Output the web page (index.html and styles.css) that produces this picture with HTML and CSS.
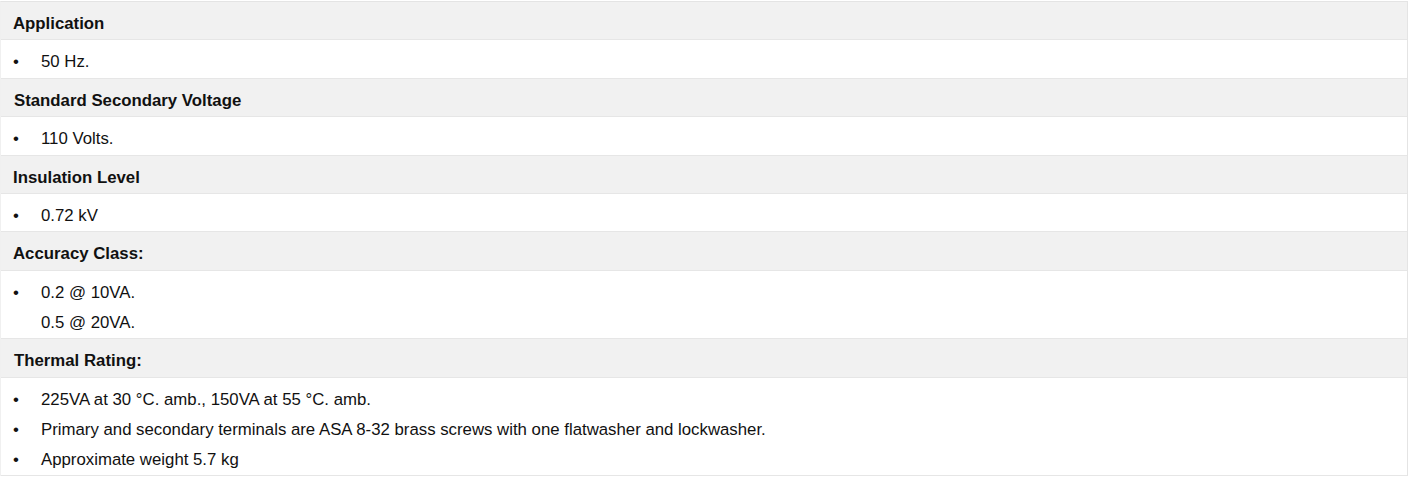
FILE: index.html
```html
<!DOCTYPE html>
<html>
<head>
<meta charset="utf-8">
<link rel="stylesheet" href="styles.css">
</head>
<body>
<div class="spec">
  <div class="head">Application</div>
  <div class="body"><ul><li>50 Hz.</li></ul></div>
  <div class="head h2">Standard Secondary Voltage</div>
  <div class="body"><ul><li>110 Volts.</li></ul></div>
  <div class="head">Insulation Level</div>
  <div class="body"><ul><li>0.72 kV</li></ul></div>
  <div class="head">Accuracy Class:</div>
  <div class="body"><ul><li>0.2 @ 10VA.<br>0.5 @ 20VA.</li></ul></div>
  <div class="head h2">Thermal Rating:</div>
  <div class="body"><ul><li>225VA at 30 °C. amb., 150VA at 55 °C. amb.</li><li>Primary and secondary terminals are ASA 8-32 brass screws with one flatwasher and lockwasher.</li><li>Approximate weight 5.7 kg</li></ul></div>
</div>
</body>
</html>
```
FILE: styles.css
```css
html, body {
  margin: 0;
  padding: 0;
  background: #ffffff;
}
body {
  padding-top: 1px;
  font-family: "Liberation Sans", Arial, sans-serif;
  color: #111111;
}
.spec {
  width: 1406px;
  border-right: 1px solid #e4e4e4;
  border-left: 1px solid #f0f0f0;
  border-top: 1px solid #e4e4e4;
}
.head {
  background: #f1f1f1;
  font-weight: bold;
  font-size: 16.8px;
  line-height: 30px;
  padding: 7px 12px 0.4px;
  border-bottom: 1px solid #e6e6e6;
}
.head.h2 {
  padding-left: 13px;
}
.body {
  border-bottom: 1px solid #e6e6e6;
  font-size: 16.8px;
  line-height: 30px;
  padding: 7px 0 0.4px;
}
.body ul {
  margin: 0;
  padding: 0;
  list-style: none;
}
.body li {
  position: relative;
  padding-left: 40px;
}
.body li::before {
  content: "•";
  position: absolute;
  left: 12px;
  top: 0;
}
```
